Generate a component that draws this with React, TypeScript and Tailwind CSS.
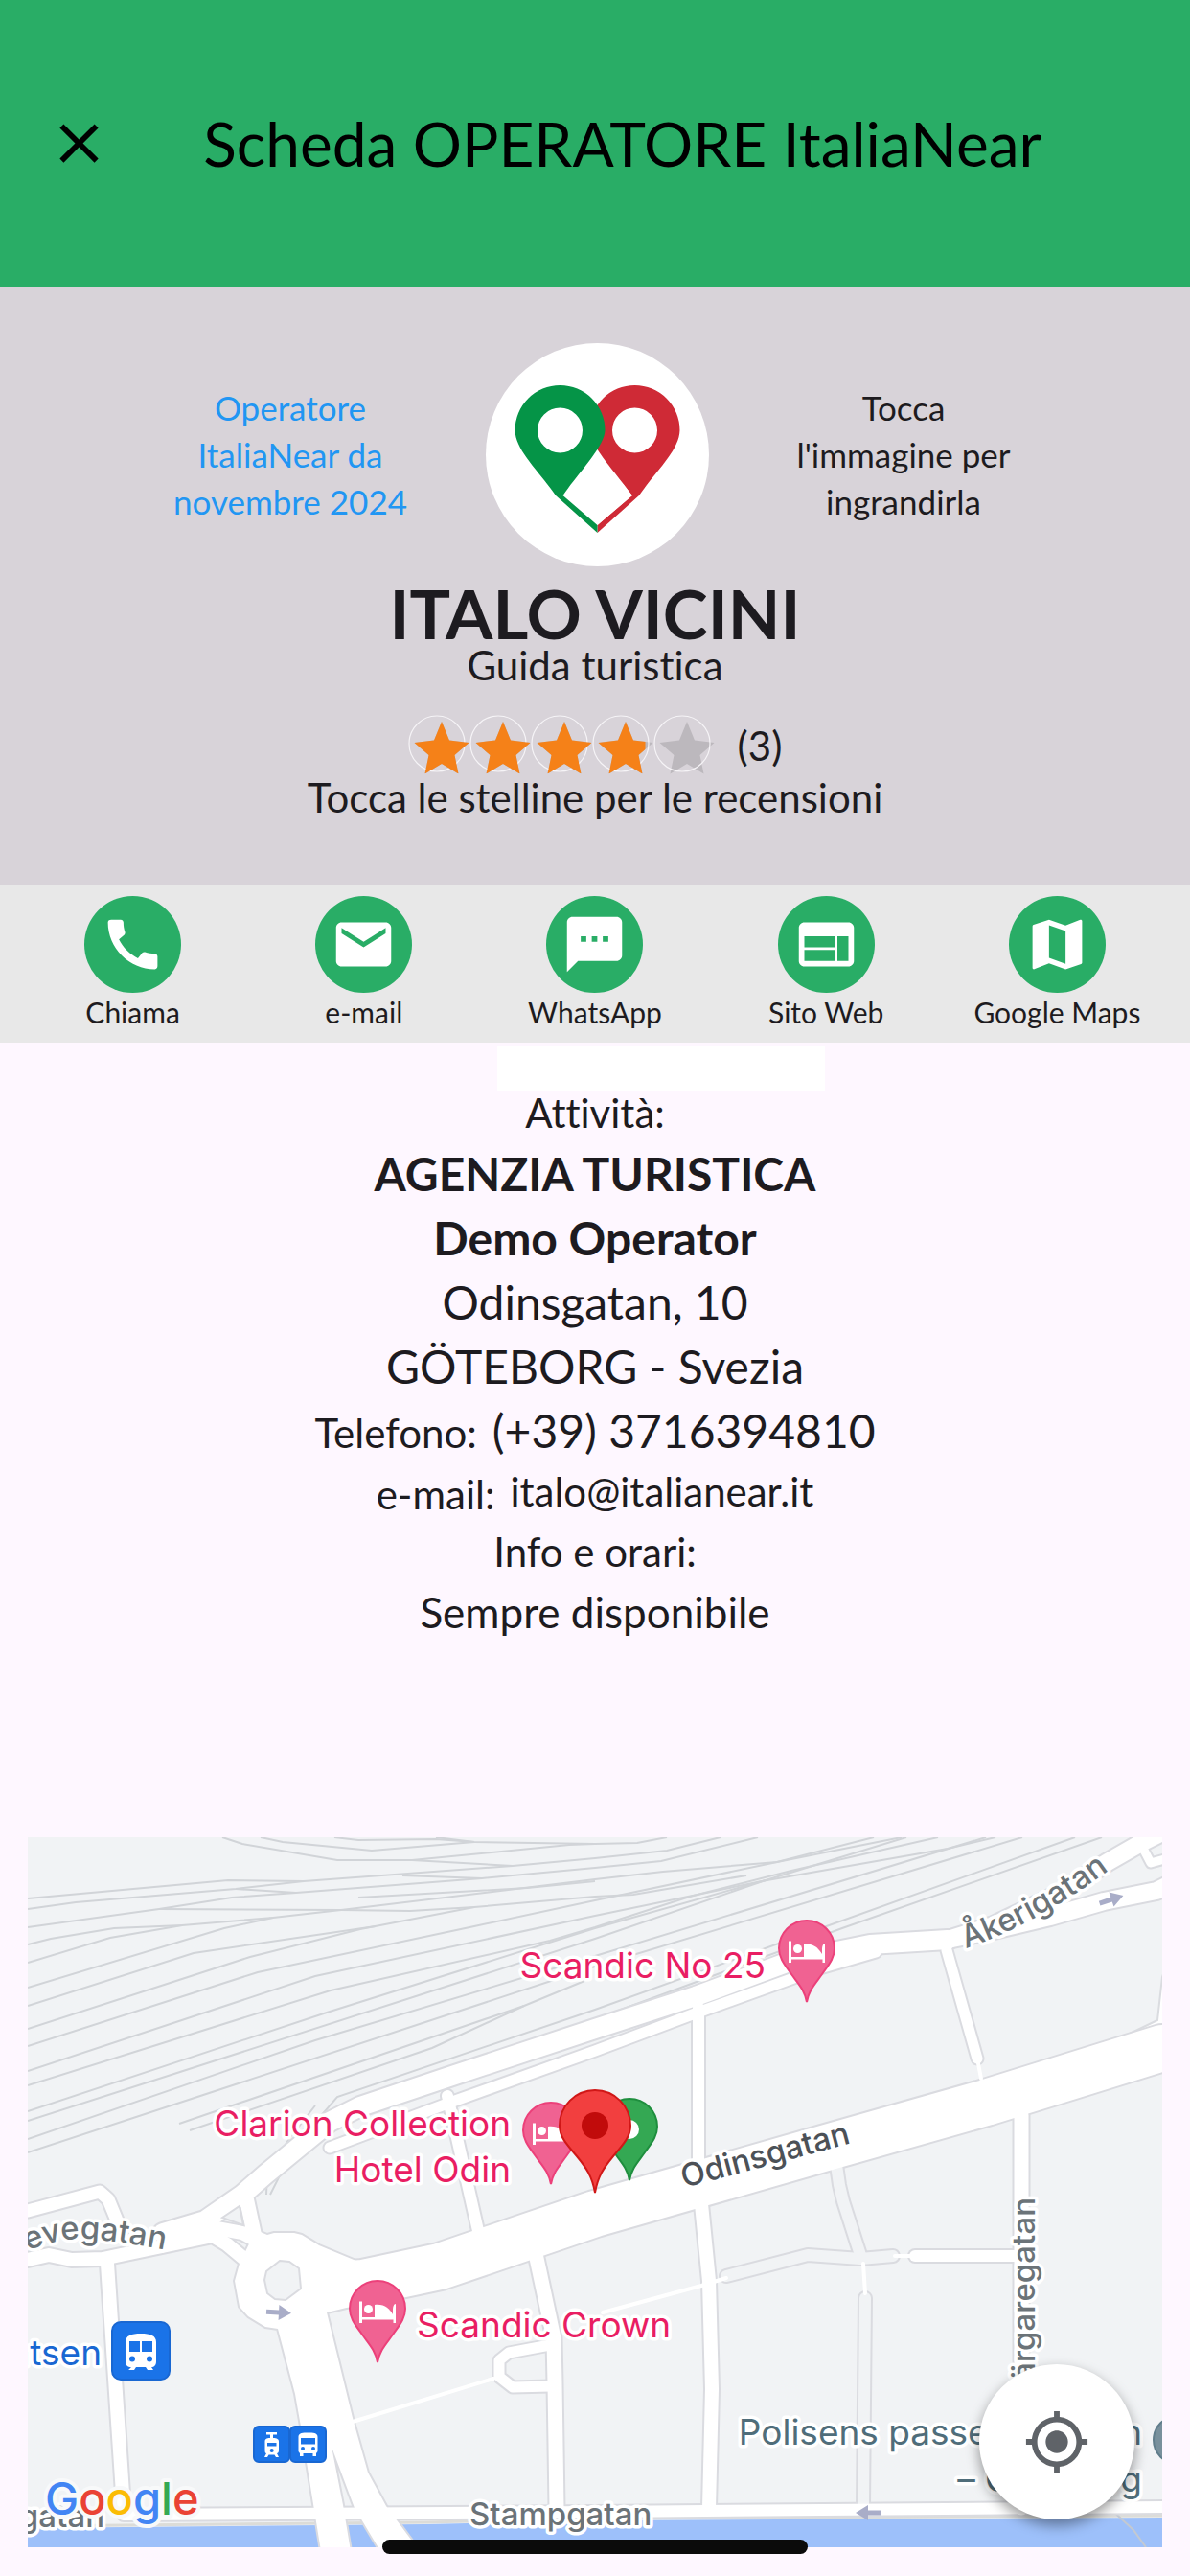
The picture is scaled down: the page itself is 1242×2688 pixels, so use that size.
import type { ReactNode } from 'react';
import type { IconType } from 'react-icons';
import { MdCall, MdClose, MdEmail, MdMap, MdMyLocation, MdTextsms, MdWeb } from 'react-icons/md';

const ACTIONS: { label: string; href: string; icon: IconType }[] = [
  { label: 'Chiama', href: 'tel:+393716394810', icon: MdCall },
  { label: 'e-mail', href: 'mailto:italo@italianear.it', icon: MdEmail },
  { label: 'WhatsApp', href: '#whatsapp', icon: MdTextsms },
  { label: 'Sito Web', href: '#web', icon: MdWeb },
  { label: 'Google Maps', href: '#maps', icon: MdMap },
];

const STARS = [1, 1, 1, 0.86, 0];

const RAILS = [
  '203,0 224,7 323,24 401,24 506,30',
  '243,0 266,5 359,14 466,5 426,0',
  '320,0 345,3 426,2 466,5 592,7 636,6 667,0',
  '401,24 565,8 592,7',
  '0,64 209,45 288,46 506,30 592,22 667,14 723,0',
  '0,75 50,68 217,54 288,46',
  '217,54 280,58',
  '0,94 137,75 213,63 280,58 474,43 592,32 661,25 762,0',
  '391,40 474,43',
  '137,75 327,76 399,77 466,73 592,62 632,60 750,40',
  '0,112 24,106 90,95 161,92 256,84 327,76 592,44 663,36 782,26 883,0',
  '345,63 521,53 592,46',
  '0,131 86,105 161,92',
  '0,157 205,95 256,84',
  '0,176 173,121 363,93',
  '0,200 232,125 347,96 466,73',
  '0,218 240,141 466,93 592,66 782,26 912,0',
  '0,244 300,145 592,82 766,46 960,12 1010,0',
  '0,259 316,160 545,108 592,94 691,62 797,35 950,0',
  '0,286 312,183 592,95 770,45 917,0',
  '0,296 592,106 770,45',
  '0,315 300,212 592,124 1000,0',
  '0,329 592,135 1038,0',
  '158,299 518,176 581,150',
  '169,306 422,220 518,176',
  '253,373 278,323 323,271 592,180 814,100 1093,0',
  '592,190 850,95 1121,0',
  '249,373 250,350 272,316 300,280',
];

// width is the white surface, the casing adds 2px on each side
const STREETS: { points: string; width: number }[] = [
  { points: '1184,220 1000,277 830,325 592,393 430,448 350,465 310,468', width: 48 },
  { points: '141,413 185,400 224,373 248,352 315,297 347,281 446,248 592,200 697,166 800,128 879,112 960,107', width: 20 },
  { points: '315,324 446,275 592,223 699,183 830,136 885,120', width: 11 },
  { points: '879,112 960,107 1008,97 1067,83 1123,67 1178,56 1190,50', width: 18 },
  { points: '960,107 1008,92 1075,60 1127,26 1162,6 1190,-8', width: 18 },
  { points: '1160,4 1172,27 1190,22', width: 9 },
  { points: '700,178 700,345', width: 12 },
  { points: '959,118 991,231', width: 11 },
  { points: '0,390 75,370 84,378 98,412', width: 13 },
  { points: '0,441 22,436 46,441 78,440 193,416 208,425 232,445', width: 14 },
  { points: '141,413 181,405 224,413 246,425', width: 14 },
  { points: '228,376 238,422', width: 15 },
  { points: '83,445 100,700', width: 14 },
  { points: '438,270 471,415', width: 12 },
  { points: '529,430 549,523 550,570 552,700', width: 15 },
  { points: '545,530 502,538 492,546 492,563 506,574 545,573', width: 11 },
  { points: '703,383 711,463 714,576 711,700', width: 14 },
  { points: '1037,290 1037,700', width: 15 },
  { points: '926,437 1037,437', width: 12 },
  { points: '100,707 592,704 1184,699', width: 12 },
];

const LANES = [
  '729,458 814,436 869,440 903,437',
  '843,335 847,363 851,380 869,436',
  '874,481 872,697',
];

const PATHS = [
  '339,610 486,565',
  '600,496 703,468 729,460',
  '905,437 923,437',
  '991,231 995,252',
  '872,445 874,476',
];

const ROUNDABOUT =
  'M221 445 216 463 221 490 230 500 248 511 261 513 279 581 285 615 298 696 306 745 337 745 329 697 317 636 341 700 368 745 409 745 374 698 355 663 340 610 312 496 345 488V443L304 426 286 415 278 413H257L250 415 238 410Z';

const PIN =
  'M0 84C-2 72-8 66-16 55-23 45-29 38-29 28A29 29 0 0 1 29 28C29 38 23 45 16 55 8 66 2 72 0 84Z';

function OperatorLogo() {
  return (
    <svg viewBox="0 0 233 233" className="size-full" aria-hidden="true">
      <path
        fill="#cf2a36"
        fillRule="evenodd"
        d="M202.500 91a47 47 0 0 0-94 0C109 108 136 135 152.500 159L116.500 190V198L160 159C178 133 202 112 202.500 91ZM155.500 67.500a23.500 23.500 0 1 1 0 47 23.500 23.500 0 0 1 0-47Z"
      />
      <path fill="#fff" d="M116.500 115 153 159 116.500 190 81 159Z" />
      <path
        fill="#059447"
        fillRule="evenodd"
        d="M30.500 91a47 47 0 0 1 94 0C124 108 97 135 80.500 159L116.500 190V198L73 159C55 133 31 112 30.500 91ZM77.500 67.500a23.500 23.500 0 1 0 0 47 23.500 23.500 0 0 0 0-47Z"
      />
    </svg>
  );
}

function Star({ fill, index }: { fill: number; index: number }) {
  const shape = 'M35 7 43 26.500 63.500 29 48.500 42 52.500 61.500 35 51 17.500 61.500 21.500 42 6.500 29 27 26.500Z';
  return (
    <svg viewBox="0 0 64 64" className="size-16" aria-hidden="true">
      <clipPath id={`star-${index}`}>
        <rect width={6.5 + 57 * fill} height="61" />
      </clipPath>
      <path fill="#bcb8bd" d={shape} />
      <circle cx="30" cy="30" r="29" fill="none" stroke="#f6f4f7" strokeWidth="1.200" />
      {fill > 0 && <path fill="#f58118" d={shape} clipPath={`url(#star-${index})`} />}
    </svg>
  );
}

function HotelPin({ x, y }: { x: number; y: number }) {
  return (
    <g transform={`translate(${x} ${y})`}>
      <path d={PIN} fill="#f06292" stroke="#ec407a" strokeWidth="2" />
      <g fill="#fff">
        <path d="M-19 20.500H-16V37H16V29C16 26 17 23 19 23V43H16.500V39.500H-16V43H-19Z" />
        <circle cx="-9.500" cy="28.500" r="4.500" />
        <path d="M-3 24C8 23 12 28 16 34V37H-3Z" />
      </g>
    </g>
  );
}

function Arrow({ x, y, angle }: { x: number; y: number; angle: number }) {
  return (
    <path
      d="M-13-2.500H0V-8L13 0 0 8V2.500H-13Z"
      fill="#a9adc8"
      transform={`translate(${x} ${y}) rotate(${angle})`}
    />
  );
}

function MapLabels() {
  return (
    <g
      fontFamily="Inter, 'Liberation Sans', sans-serif"
      stroke="#fff"
      strokeWidth="7"
      strokeLinejoin="round"
      paintOrder="stroke"
    >
      <g fontSize="33" fontWeight="500" fill="#6b7378">
        <text>
          <textPath href="#akerigatan">Åkerigatan</textPath>
        </text>
        <text>
          <textPath href="#grevegatan">revegatan</textPath>
        </text>
        <text transform="translate(685 366) rotate(-15)" fill="#4c5157">Odinsgatan</text>
        <text transform="translate(1051 376) rotate(-90)" textAnchor="end">Färgaregatan</text>
        <text x="461" y="718">Stampgatan</text>
        <text x="80" y="720" textAnchor="end">gatan</text>
      </g>
      <g fontSize="37" fill="#e91e63">
        <text x="770" y="147" textAnchor="end">Scandic No 25</text>
        <text x="504" y="312" textAnchor="end">Clarion Collection</text>
        <text x="504" y="360" textAnchor="end">Hotel Odin</text>
        <text x="406" y="522">Scandic Crown</text>
      </g>
      <text x="77" y="551" fontSize="37" fill="#1967d2" textAnchor="end">atsen</text>
      <g fontSize="37" fill="#4f6d7a" textAnchor="end">
        <text x="1163" y="634">Polisens passexpedition</text>
        <text x="1163" y="683">– Göteborg</text>
      </g>
    </g>
  );
}

function TransitBadges() {
  return (
    <>
      <g transform="translate(88 506)">
        <rect width="60" height="60" rx="9" fill="#1a73e8" stroke="#1967d2" strokeWidth="2" />
        <path fill="#fff" d="M14 21C14 14 20 12 30 12S46 14 46 21V41C46 45 44 47 41 47L43 50H37L35 47H25L23 50H17L20 47C16 47 14 45 14 41Z" />
        <path fill="#1a73e8" d="M18 20H29V31H18ZM31 20H42V31H31Z" />
        <circle cx="21" cy="38.500" r="3" fill="#1a73e8" />
        <circle cx="39" cy="38.500" r="3" fill="#1a73e8" />
      </g>
      <g transform="translate(236 615)">
        <rect width="37" height="37" rx="5" fill="#1a73e8" stroke="#1967d2" strokeWidth="2" />
        <path fill="#fff" d="M13 6H24V8.500H20V12C24 12 26 13 26 16V25C26 27 25 28 24 28L26 32H23L21.500 29.500H15.500L14 32H11L13 28C12 28 11.500 27 11.500 25V16C11.500 13 13 12 17 12V8.500H13Z" />
        <path fill="#1a73e8" d="M14 17H23.500V20.500H14Z" />
        <circle cx="18.700" cy="25" r="2" fill="#1a73e8" />
      </g>
      <g transform="translate(274 615)">
        <rect width="37" height="37" rx="5" fill="#1a73e8" stroke="#1967d2" strokeWidth="2" />
        <path fill="#fff" d="M8.500 11C8.500 7 12 6.500 18.500 6.500S28.500 7 28.500 11V26L27 28V31H23.500V28H13.500V31H10V28L8.500 26Z" />
        <path fill="#1a73e8" d="M11 12H26V18.500H11Z" />
        <circle cx="13" cy="23" r="2" fill="#1a73e8" />
        <circle cx="24" cy="23" r="2" fill="#1a73e8" />
      </g>
    </>
  );
}

function StreetMap() {
  return (
    <svg viewBox="0 0 1184 741" className="block w-full" role="img" aria-label="Mappa di Odinsgatan, Göteborg">
      <defs>
        <path id="akerigatan" d="M979 116Q1057 90 1145 22" />
        <path id="grevegatan" d="M-11 437Q20 421 52 419 95 420 170 436" />
      </defs>
      <rect width="1184" height="741" fill="#f1f3f5" />
      <g fill="none" stroke="#d1d4d8" strokeWidth="2">
        {RAILS.map((points) => <polyline key={points} points={points} />)}
      </g>
      <path d="M0 721 414 717 592 713 1184 710V741H0Z" fill="#9dc0fa" />
      <path d="M0 719 414 715 592 711 1184 708" fill="none" stroke="#dcdcd8" strokeWidth="3" />
      <path d="M1119 698 1129 700 1154 723 1167 741" fill="none" stroke="#c3c9d2" strokeWidth="2" />
      <path d="M1186 140 1184 146 1179 191 1150 205H1186Z" fill="#fff" stroke="#dadce0" strokeWidth="2" />

      <g fill="none" stroke="#dadbe0" strokeLinejoin="round" strokeLinecap="round">
        {LANES.map((points) => <polyline key={points} points={points} strokeWidth="16" />)}
        {STREETS.map(({ points, width }) => (
          <polyline key={points} points={points} strokeWidth={width + 4} />
        ))}
        <path d={ROUNDABOUT} strokeWidth="4" />
      </g>
      <g fill="none" stroke="#f1f3f5" strokeLinejoin="round" strokeLinecap="round">
        {LANES.map((points) => <polyline key={points} points={points} strokeWidth="12" />)}
      </g>
      <g fill="none" stroke="#fff" strokeLinejoin="round" strokeLinecap="round">
        {PATHS.map((points) => <polyline key={points} points={points} strokeWidth="4" />)}
        {STREETS.map(({ points, width }) => (
          <polyline key={points} points={points} strokeWidth={width} />
        ))}
      </g>
      <path d={ROUNDABOUT} fill="#fff" />
      <path
        d="M263 442 273 443 283 450 285 471 269 483 258 482 250 476 247 462 249 453Z"
        fill="#f1f3f5"
        stroke="#dadbe0"
        strokeWidth="2"
      />
      <path d="M203 397 221 385 225 405Z" fill="#f1f3f5" stroke="#dadbe0" strokeWidth="2" />

      <Arrow x={262} y={496} angle={3} />
      <Arrow x={1131} y={65} angle={-18} />
      <Arrow x={877} y={705} angle={180} />

      <MapLabels />
      <TransitBadges />
      <circle cx="1200" cy="629" r="25" fill="#78909c" stroke="#607d8b" strokeWidth="2" />

      <HotelPin x={813} y={88} />
      <HotelPin x={546} y={278} />
      <HotelPin x={365} y={464} />
      <g transform="translate(628 274)">
        <path d={PIN} fill="#34a853" stroke="#1e8e3e" strokeWidth="2" />
        <circle cy="31" r="10" fill="#fff" />
      </g>
      <path
        d="M592 371C589 354 583 345 573 333 561 319 555 312 555 301A37 37 0 0 1 629 301C629 312 623 319 611 333 601 345 595 354 592 371Z"
        fill="#f23f3f"
        stroke="#d01717"
        strokeWidth="2"
      />
      <circle cx="592" cy="301" r="14" fill="#c10b0b" />

      <text
        x="18"
        y="707"
        fontFamily="Inter, sans-serif"
        fontSize="47"
        fontWeight="500"
        stroke="#f8f9fa"
        strokeWidth="8"
        strokeLinejoin="round"
        paintOrder="stroke"
      >
        <tspan fill="#4285f4">G</tspan>
        <tspan fill="#ea4335">o</tspan>
        <tspan fill="#fbbc04">o</tspan>
        <tspan fill="#4285f4">g</tspan>
        <tspan fill="#34a853">l</tspan>
        <tspan fill="#ea4335">e</tspan>
      </text>
    </svg>
  );
}

function Row({ children }: { children: ReactNode }) {
  return <div className="text-5xl leading-[67px]">{children}</div>;
}

export default function App() {
  return (
    <div className="relative min-h-screen bg-[#fef7ff] font-[Lato,sans-serif] text-[#1d1b20] [font-variant-ligatures:none]">
      <header className="flex h-[299px] items-center bg-[#29ad66] pl-12 text-black">
        <button type="button" aria-label="Chiudi" className="shrink-0">
          <MdClose className="size-[69px]" />
        </button>
        <h1 className="flex-1 pr-15 text-center text-[64px] leading-[80px] whitespace-nowrap">
          Scheda OPERATORE ItaliaNear
        </h1>
      </header>

      <section className="flex flex-col items-center bg-[#d8d3d9] pt-[59px] pb-[69px] text-center">
        <div className="grid grid-cols-[320px_320px_320px] place-items-center pl-1 text-[35px] leading-[49px]">
          <p className="w-[256px] text-[#2196f3]">Operatore ItaliaNear da novembre 2024</p>
          <button type="button" aria-label="Ingrandisci immagine" className="size-[233px] overflow-hidden rounded-full bg-white">
            <OperatorLogo />
          </button>
          <p className="w-[256px]">Tocca l'immagine per ingrandirla</p>
        </div>
        <h2 className="mt-[11px] text-[71px] leading-[76px] font-bold">ITALO VICINI</h2>
        <p className="text-[42px] leading-8">Guida turistica</p>
        <button type="button" aria-label="Recensioni" className="mt-9 flex items-center gap-6 text-[42px] leading-[62px]">
          <span className="flex">
            {STARS.map((fill, i) => <Star key={i} fill={fill} index={i} />)}
          </span>
          <span>(3)</span>
        </button>
        <p className="text-[42px] leading-11">Tocca le stelline per le recensioni</p>
      </section>

      <nav className="grid grid-cols-5 bg-[#e8e8e8] px-[18px] py-3">
        {ACTIONS.map(({ label, href, icon: Icon }) => (
          <a key={label} href={href} className="flex flex-col items-center text-[30px] leading-10 whitespace-nowrap">
            <span className="flex size-[101px] items-center justify-center rounded-full bg-[#29ad66] text-white">
              <Icon className="size-[69px]" />
            </span>
            {label}
          </a>
        ))}
      </nav>

      <main>
        <div className="flex justify-center pt-[3px] pl-[138px]">
          <div className="h-[47px] w-[342px] bg-white" />
        </div>
        <section className="flex flex-col items-center text-center text-[42px]">
          <p className="mb-[7px] leading-[46px]">Attività:</p>
          <Row><strong>AGENZIA TURISTICA</strong></Row>
          <Row><strong>Demo Operator</strong></Row>
          <Row>Odinsgatan, 10</Row>
          <Row>GÖTEBORG - Svezia</Row>
          <Row>
            <span className="mr-4 text-[42px] leading-none">Telefono:</span>
            <a href="tel:+393716394810">(+39) 3716394810</a>
          </Row>
          <div className="flex items-start gap-4">
            <span className="leading-[67px]">e-mail:</span>
            <a href="mailto:italo@italianear.it" className="leading-[61px]">italo@italianear.it</a>
          </div>
          <p className="leading-[52px]">Info e orari:</p>
          <p className="text-[44px] leading-[75px]">Sempre disponibile</p>
        </section>

        <div className="relative mx-[29px] mt-[197px] mb-[30px]">
          <StreetMap />
          <button
            type="button"
            aria-label="La mia posizione"
            className="absolute right-[29px] bottom-[29px] flex size-[162px] items-center justify-center rounded-full bg-white text-[#5f6368] shadow-[0_6px_14px_rgba(0,0,0,0.4)]"
          >
            <MdMyLocation className="size-[70px]" />
          </button>
        </div>
      </main>

      <div className="absolute bottom-[23px] left-1/2 h-[15px] w-[444px] -translate-x-1/2 rounded-full bg-[#0b0b0b]" />
    </div>
  );
}
